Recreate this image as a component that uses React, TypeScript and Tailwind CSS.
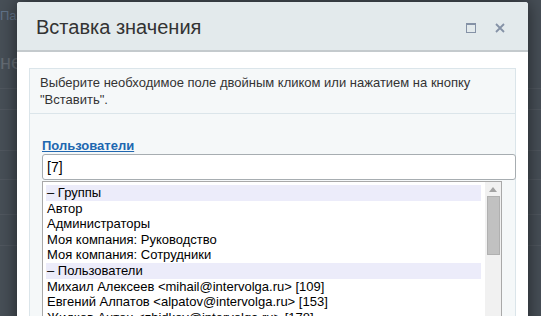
import React from 'react'

const groups = ['Автор', 'Администраторы', 'Моя компания: Руководство', 'Моя компания: Сотрудники']
const users = [
  'Михаил Алексеев <mihail@intervolga.ru> [109]',
  'Евгений Алпатов <alpatov@intervolga.ru> [153]',
  'Жидков Антон <zhidkov@intervolga.ru> [178]',
  'Иван Иванов <ivanov@intervolga.ru> [201]',
]

const Row = ({ text, head }: { text: string; head?: boolean }) => (
  <div className={`h-[15.6px] leading-[15.6px] whitespace-nowrap px-[1px] ${head ? 'bg-[#ececfa]' : ''}`}>{text}</div>
)

export default function App() {
  return (
    <div className="relative w-[541px] h-[316px] overflow-hidden bg-[#474f57] font-['Liberation_Sans',Arial,sans-serif]">
      {/* page behind the overlay */}
      <div className="flex flex-col pt-[8px] text-[#6d7886]">
        <div className="text-[13px] leading-[16px] text-[#62748a]">Пар</div>
        <div className="mt-[28px] text-[20px] leading-[20px] text-[#656c74]">не</div>
        <div className="mt-[16px] border-t border-[#50575f]" />
        <div className="mt-[20px] border-t border-[#50575f]" />
        <div className="mt-[40px] border-t border-[#50575f]" />
        <div className="mt-[28px] border-t border-[#50575f]" />
        <div className="mt-[34px] border-t border-[#50575f]" />
        <div className="mt-[30px] border-t border-[#50575f]" />
      </div>

      <div className="absolute left-[17px] top-[2px] w-[511px] h-[330px] bg-white rounded-t-[3px] shadow-[0_0_18px_rgba(0,0,0,0.55)] flex flex-col">
        <div className="h-[50px] shrink-0 bg-[#e3eaec] border-b-2 border-[#c4cacd] rounded-t-[3px] flex items-center justify-between pl-[19px] pr-[23px]">
          <span className="text-[20px] text-[#333333] pt-[1px]">Вставка значения</span>
          <div className="flex items-center gap-[19px] pt-[4px]">
            <span className="block w-[10px] h-[10px] border-[1.5px] border-[#8592a6] border-t-2" />
            <svg width="10" height="10" viewBox="0 0 10 10">
              <path d="M1 1L9 9M9 1L1 9" stroke="#8592a6" strokeWidth="1.8" />
            </svg>
          </div>
        </div>

        <div className="px-[12px] pt-[16px]">
          <div className="border border-[#dbe5ea] bg-[#f5f8f9] text-[13px] text-[#333333]">
            <div className="px-[10px] py-[5px] leading-[17px]">
              Выберите необходимое поле двойным кликом или нажатием на кнопку<br />"Вставить".
            </div>
            <div className="border-t border-[#dbe5ea] pt-[24px] pl-[12px]">
              <a className="font-bold text-[#2067b0] underline leading-[16px] block">Пользователи</a>
              <div className="h-[26px] w-[474px] border border-[#a7adb1] rounded-[3px] bg-white flex items-center pl-[4px] text-[14px] text-black">
                [7]
              </div>
              <div className="mt-[1px] w-[460px] h-[200px] border border-[#a9a9a9] bg-white flex text-black">
                <div className="flex-1 pt-[3px] pl-[3px] pr-[4px]">
                  <Row text="– Группы" head />
                  {groups.map((g) => <Row key={g} text={g} />)}
                  <Row text="– Пользователи" head />
                  {users.map((u) => <Row key={u} text={u} />)}
                </div>
                <div className="w-[16px] bg-[#f1f1f1] flex flex-col items-center">
                  <svg width="8" height="5" viewBox="0 0 8 5" className="mt-[5px]">
                    <path d="M0 5L4 0L8 5Z" fill="#a3a3a3" />
                  </svg>
                  <div className="mt-[4px] w-[13px] h-[59px] bg-[#c1c1c1] border border-[#b0b0b0]" />
                </div>
              </div>
            </div>
          </div>
        </div>
      </div>
    </div>
  )
}
